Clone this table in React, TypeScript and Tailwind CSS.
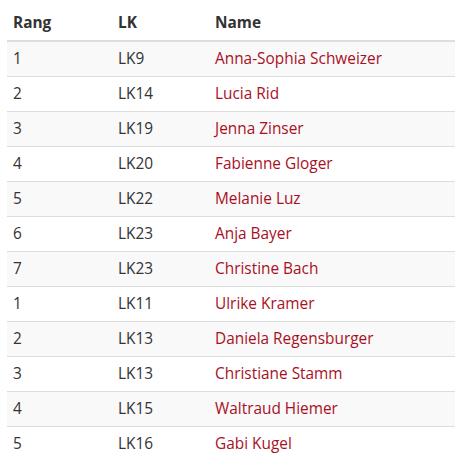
const rows: [string, string, string][] = [
  ['1', 'LK9', 'Anna-Sophia Schweizer'],
  ['2', 'LK14', 'Lucia Rid'],
  ['3', 'LK19', 'Jenna Zinser'],
  ['4', 'LK20', 'Fabienne Gloger'],
  ['5', 'LK22', 'Melanie Luz'],
  ['6', 'LK23', 'Anja Bayer'],
  ['7', 'LK23', 'Christine Bach'],
  ['1', 'LK11', 'Ulrike Kramer'],
  ['2', 'LK13', 'Daniela Regensburger'],
  ['3', 'LK13', 'Christiane Stamm'],
  ['4', 'LK15', 'Waltraud Hiemer'],
  ['5', 'LK16', 'Gabi Kugel'],
];

export default function App() {
  return (
    <div className="bg-white pl-[7px] font-['Open_Sans',sans-serif] text-[15.4px] text-[#333]">
      <table className="w-[448px] border-collapse">
        <thead>
          <tr className="h-[41px] border-b-2 border-[#ddd]">
            <th className="w-[105px] px-[6px] pt-[5px] text-left align-middle font-bold">Rang</th>
            <th className="w-[97px] px-[6px] pt-[5px] text-left align-middle font-bold">LK</th>
            <th className="px-[6px] pt-[5px] text-left align-middle font-bold">Name</th>
          </tr>
        </thead>
        <tbody>
          {rows.map(([rang, lk, name], i) => (
            <tr key={i} className={`h-[35px] border-t border-[#ddd] first:border-t-0 ${i % 2 === 0 ? 'bg-[#f9f9f9]' : 'bg-white'}`}>
              <td className="px-[6px] align-middle">{rang}</td>
              <td className="px-[6px] align-middle">{lk}</td>
              <td className="px-[6px] align-middle">
                <a href="#" className="text-[#a8101f]">{name}</a>
              </td>
            </tr>
          ))}
        </tbody>
      </table>
    </div>
  );
}
